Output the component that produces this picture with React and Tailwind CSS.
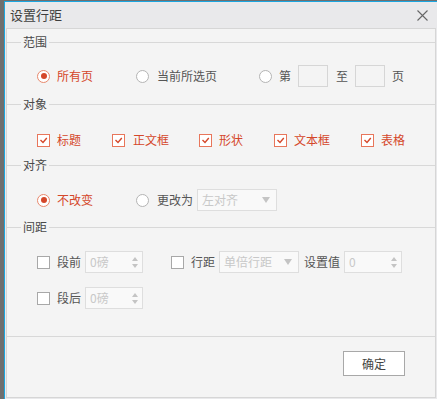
import React from "react";

const RED = "#d4472a";

function Radio({ checked }) {
  return (
    <span
      className={`flex h-[13px] w-[13px] shrink-0 items-center justify-center rounded-full border bg-white ${
        checked ? "border-[#e8886c]" : "border-[#b4b4b4]"
      }`}
    >
      {checked && <span className="h-[6px] w-[6px] rounded-full bg-[#d4472a]" />}
    </span>
  );
}

function Check({ checked }) {
  return (
    <span
      className={`flex h-[13px] w-[13px] shrink-0 items-center justify-center border bg-white ${
        checked ? "border-[#e8765b]" : "border-[#a8a8a8]"
      }`}
    >
      {checked && (
        <svg width="11" height="11" viewBox="0 0 11 11">
          <path d="M2.5 5 L5 7.5 L8.8 3" fill="none" stroke="#d4472a" strokeWidth="1.4" />
        </svg>
      )}
    </span>
  );
}

function Header({ children }) {
  return (
    <div className="flex h-[16px] items-center">
      <div className="h-px w-[14px] bg-[#d8d8d8]" />
      <span className="px-[2px] text-[12px] leading-[16px] text-[#4a4a4a]">{children}</span>
      <div className="h-px flex-1 bg-[#d8d8d8]" />
    </div>
  );
}

function Spinner({ value, w }) {
  return (
    <div className={`flex h-[22px] items-center justify-between border border-[#dedede] bg-[#f9f9f9] pl-[4px] pr-[4px] ${w}`}>
      <span className="text-[12px] leading-[16px] text-[#c8c8c8]">{value}</span>
      <div className="flex flex-col items-center gap-[3px]">
        <svg width="6" height="4" viewBox="0 0 6 4"><path d="M0 4 L3 0 L6 4 Z" fill="#c4c4c4" /></svg>
        <svg width="6" height="4" viewBox="0 0 6 4"><path d="M0 0 L6 0 L3 4 Z" fill="#c4c4c4" /></svg>
      </div>
    </div>
  );
}

function Select({ value, w }) {
  return (
    <div className={`flex h-[22px] items-center justify-between border border-[#dedede] bg-[#f9f9f9] pl-[4px] pr-[6px] ${w}`}>
      <span className="text-[12px] leading-[16px] text-[#c8c8c8]">{value}</span>
      <svg width="8" height="6" viewBox="0 0 8 6"><path d="M0 0 L8 0 L4 6 Z" fill="#c4c4c4" /></svg>
    </div>
  );
}

export default function App() {
  return (
    <div className="flex h-[399px] w-[437px] overflow-hidden bg-[#6f6f6f] font-['Noto_Sans_CJK_SC',sans-serif]">
      <div className="ml-[4px] mt-[1px] flex flex-1 flex-col border-l border-t border-[#1ba6e0] bg-[#e9e9eb]">
        <div className="flex h-[26px] shrink-0 items-center justify-between pl-[5px] pr-[9px]">
          <span className="text-[13px] leading-[16px] text-[#3e3e3e]">设置行距</span>
          <svg width="11" height="11" viewBox="0 0 11 11">
            <path d="M0.5 0.5 L10.5 10.5 M10.5 0.5 L0.5 10.5" stroke="#666" strokeWidth="1.1" />
          </svg>
        </div>
        <div className="mx-[1px] mb-[1px] flex flex-1 flex-col border border-[#d6d6d6] bg-[#f4f4f4]">
          <div className="mt-[5px]">
            <Header>范围</Header>
          </div>
          <div className="mt-[14px] flex h-[24px] items-center pl-[30px] text-[12px] leading-[16px] text-[#555]">
            <div className="flex w-[99px] items-center gap-[7px]">
              <Radio checked />
              <span style={{ color: RED }}>所有页</span>
            </div>
            <div className="flex w-[123px] items-center gap-[8px]">
              <Radio />
              <span>当前所选页</span>
            </div>
            <div className="flex items-center">
              <Radio />
              <span className="ml-[7px]">第</span>
              <div className="ml-[7px] h-[22px] w-[30px] border border-[#d6d6d6] bg-[#f4f4f4]" />
              <span className="ml-[8px]">至</span>
              <div className="ml-[7px] h-[22px] w-[30px] border border-[#d6d6d6] bg-[#f4f4f4]" />
              <span className="ml-[7px]">页</span>
            </div>
          </div>
          <div className="mt-[8px]">
            <Header>对象</Header>
          </div>
          <div className="mt-[16px] flex h-[24px] items-center pl-[30px] text-[12px] leading-[16px]" style={{ color: RED }}>
            <div className="flex w-[75px] items-center gap-[7px]">
              <Check checked />
              <span>标题</span>
            </div>
            <div className="flex w-[87px] items-center gap-[8px]">
              <Check checked />
              <span>正文框</span>
            </div>
            <div className="flex w-[75px] items-center gap-[7px]">
              <Check checked />
              <span>形状</span>
            </div>
            <div className="flex w-[87px] items-center gap-[7px]">
              <Check checked />
              <span>文本框</span>
            </div>
            <div className="flex items-center gap-[7px]">
              <Check checked />
              <span>表格</span>
            </div>
          </div>
          <div className="mt-[5px]">
            <Header>对齐</Header>
          </div>
          <div className="mt-[15px] flex h-[24px] items-center pl-[30px] text-[12px] leading-[16px] text-[#555]">
            <div className="flex w-[99px] items-center gap-[7px]">
              <Radio checked />
              <span style={{ color: RED }}>不改变</span>
            </div>
            <div className="flex items-center">
              <Radio />
              <span className="ml-[8px]">更改为</span>
              <div className="ml-[4px]">
                <Select value="左对齐" w="w-[80px]" />
              </div>
            </div>
          </div>
          <div className="mt-[7px]">
            <Header>间距</Header>
          </div>
          <div className="mt-[15px] flex h-[24px] items-center pl-[30px] text-[12px] leading-[16px] text-[#555]">
            <Check />
            <span className="ml-[7px]">段前</span>
            <div className="ml-[4px]">
              <Spinner value="0磅" w="w-[58px]" />
            </div>
            <div className="ml-[28px]">
              <Check />
            </div>
            <span className="ml-[7px]">行距</span>
            <div className="ml-[4px]">
              <Select value="单倍行距" w="w-[80px]" />
            </div>
            <span className="ml-[5px]">设置值</span>
            <div className="ml-[4px]">
              <Spinner value="0" w="w-[58px]" />
            </div>
          </div>
          <div className="mt-[12px] flex h-[24px] items-center pl-[30px] text-[12px] leading-[16px] text-[#555]">
            <Check />
            <span className="ml-[7px]">段后</span>
            <div className="ml-[4px]">
              <Spinner value="0磅" w="w-[58px]" />
            </div>
          </div>
          <div className="mt-[26px] h-px bg-[#d8d8d8]" />
          <div className="mt-[14px] flex justify-end pr-[30px]">
            <div className="flex h-[25px] w-[62px] items-center justify-center border border-[#a8a8a8] bg-white text-[12px] leading-[16px] text-[#444]">
              确定
            </div>
          </div>
        </div>
      </div>
    </div>
  );
}
